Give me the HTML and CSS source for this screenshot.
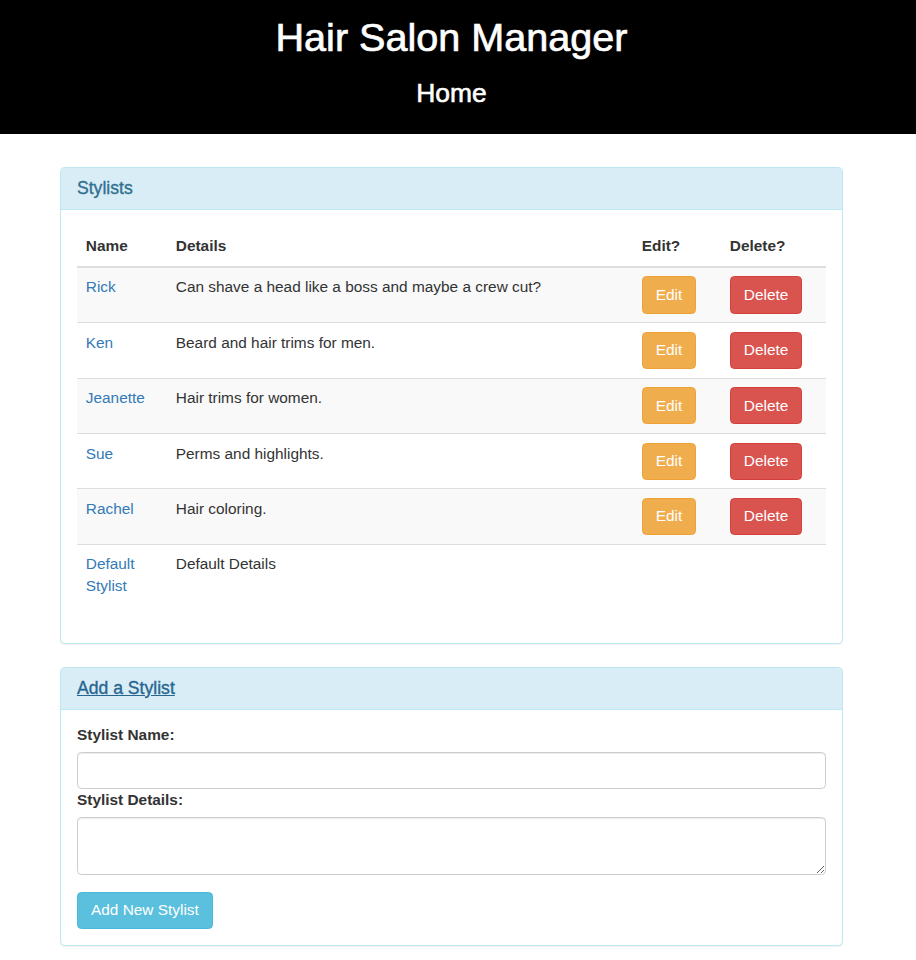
FILE: index.html
```html
<!DOCTYPE html>
<html>
<head>
<meta charset="utf-8">
<title>Hair Salon Manager</title>
<link rel="stylesheet" href="styles.css">
</head>
<body>
<header class="masthead">
  <h1 class="title">Hair Salon Manager</h1>
  <h3 class="subtitle">Home</h3>
</header>

<main class="content">
  <section class="panel">
    <div class="panel-heading"><h3 class="panel-title">Stylists</h3></div>
    <div class="panel-body">
      <table class="table">
        <thead>
          <tr>
            <th class="col-name">Name</th>
            <th>Details</th>
            <th class="col-edit">Edit?</th>
            <th class="col-delete">Delete?</th>
          </tr>
        </thead>
        <tbody>
          <tr class="odd">
            <td><a href="#">Rick</a></td>
            <td>Can shave a head like a boss and maybe a crew cut?</td>
            <td><button class="btn btn-warning">Edit</button></td>
            <td><button class="btn btn-danger">Delete</button></td>
          </tr>
          <tr>
            <td><a href="#">Ken</a></td>
            <td>Beard and hair trims for men.</td>
            <td><button class="btn btn-warning">Edit</button></td>
            <td><button class="btn btn-danger">Delete</button></td>
          </tr>
          <tr class="odd">
            <td><a href="#">Jeanette</a></td>
            <td>Hair trims for women.</td>
            <td><button class="btn btn-warning">Edit</button></td>
            <td><button class="btn btn-danger">Delete</button></td>
          </tr>
          <tr>
            <td><a href="#">Sue</a></td>
            <td>Perms and highlights.</td>
            <td><button class="btn btn-warning">Edit</button></td>
            <td><button class="btn btn-danger">Delete</button></td>
          </tr>
          <tr class="odd">
            <td><a href="#">Rachel</a></td>
            <td>Hair coloring.</td>
            <td><button class="btn btn-warning">Edit</button></td>
            <td><button class="btn btn-danger">Delete</button></td>
          </tr>
          <tr>
            <td><a href="#">Default Stylist</a></td>
            <td>Default Details</td>
            <td></td>
            <td></td>
          </tr>
        </tbody>
      </table>
    </div>
  </section>

  <section class="panel">
    <div class="panel-heading"><h3 class="panel-title"><a href="#" class="title-link">Add a Stylist</a></h3></div>
    <div class="panel-body form-body">
      <form class="stylist-form">
        <label class="form-label" for="name">Stylist Name:</label>
        <input class="form-control" id="name" type="text">
        <label class="form-label" for="details">Stylist Details:</label>
        <textarea class="form-control textarea" id="details" rows="2"></textarea>
        <button type="button" class="btn btn-info submit">Add New Stylist</button>
      </form>
    </div>
  </section>
</main>
</body>
</html>
```

FILE: styles.css
```css
* {
  box-sizing: border-box;
}

html, body {
  margin: 0;
  padding: 0;
  background: #fff;
}

body {
  font-family: "Liberation Sans", Arial, Helvetica, sans-serif;
  font-size: 15.4px;
  line-height: 22px;
  color: #333;
}

.masthead {
  background: #000;
  color: #fff;
  text-align: center;
  padding: 16px 13px 27px 0;
  height: 134px;
}

.title {
  margin: 0;
  font-size: 39.6px;
  line-height: 43.6px;
  font-weight: 500;
  -webkit-text-stroke: 0.7px #fff;
}

.subtitle {
  margin: 19px 0 0;
  font-size: 26.4px;
  line-height: 29px;
  font-weight: 500;
  -webkit-text-stroke: 0.6px #fff;
}

.content {
  width: 903px;
  padding-top: 33px;
}

.panel {
  width: 783px;
  margin: 0 auto 23px;
  border: 1px solid #bce8f1;
  border-radius: 4.4px;
  background: #fff;
  box-shadow: 0 1px 1px rgba(0, 0, 0, 0.05);
}

.panel-heading {
  background: #d9edf7;
  color: #31708f;
  border-bottom: 1px solid #bce8f1;
  padding: 11px 16px;
  border-radius: 3.4px 3.4px 0 0;
}

.panel-title {
  margin: 0;
  font-size: 17.6px;
  line-height: 19.4px;
  font-weight: 500;
  -webkit-text-stroke: 0.35px currentColor;
}

.title-link {
  color: #286690;
  text-decoration: underline;
}

.panel-body {
  padding: 16px;
}

.form-body {
  padding-top: 14px;
}

a {
  color: #337ab7;
  text-decoration: none;
}

.table {
  width: 100%;
  border-collapse: collapse;
  border-spacing: 0;
  margin-bottom: 21px;
}

.table th,
.table td {
  padding: 8.6px 8.8px;
  text-align: left;
  vertical-align: top;
  line-height: 22px;
}

.table th {
  font-weight: bold;
  border-bottom: 2px solid #ddd;
  vertical-align: bottom;
  padding-top: 8.8px;
}

.table td {
  border-top: 1px solid #ddd;
}

.table tbody tr:first-child td {
  border-top: 0;
}

.table tr.odd td {
  background: #f9f9f9;
}

.col-name {
  width: 90px;
}

.col-edit {
  width: 88px;
}

.col-delete {
  width: 105px;
}

.btn {
  display: inline-block;
  font-family: inherit;
  font-size: 15.4px;
  line-height: 22px;
  padding: 6.6px 13px;
  border: 1px solid transparent;
  border-radius: 4.4px;
  color: #fff;
  cursor: pointer;
  vertical-align: middle;
}

.btn-warning {
  background: #f0ad4e;
  border-color: #eea236;
}

.btn-danger {
  background: #d9534f;
  border-color: #d43f3a;
}

.btn-info {
  background: #5bc0de;
  border-color: #46b8da;
}

.stylist-form {
  display: flex;
  flex-direction: column;
  align-items: flex-start;
}

.form-label {
  font-weight: bold;
  margin-bottom: 5.5px;
  line-height: 22px;
}

.form-control {
  display: block;
  width: 100%;
  height: 37.4px;
  padding: 6.6px 13.2px;
  font-family: inherit;
  font-size: 15.4px;
  line-height: 22px;
  color: #555;
  background: #fff;
  border: 1px solid #ccc;
  border-radius: 4.4px;
  box-shadow: inset 0 1px 1px rgba(0, 0, 0, 0.075);
  margin: 0;
}

.textarea {
  height: 58px;
  resize: vertical;
}

.submit {
  margin-top: 17px;
}
```
